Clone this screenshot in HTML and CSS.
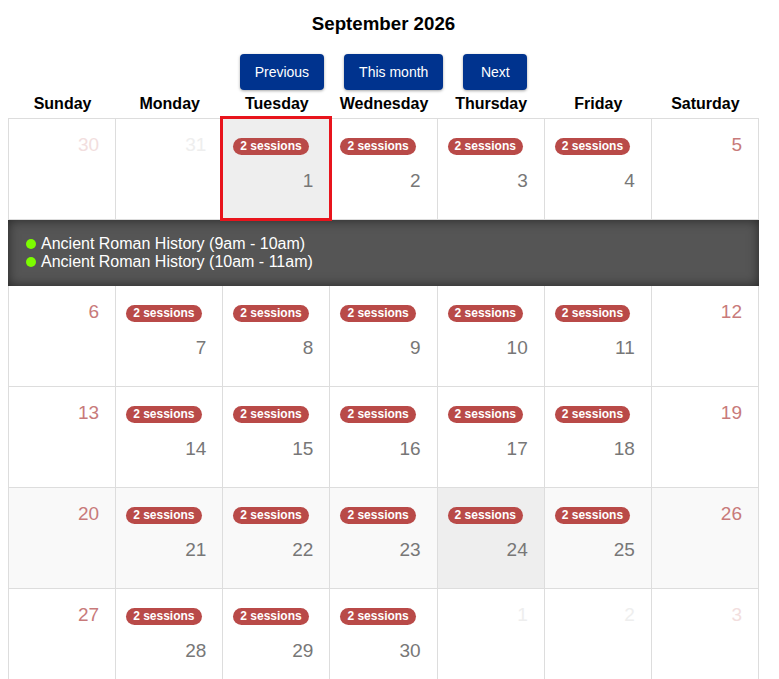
FILE: index.html
```html
<!DOCTYPE html>
<html lang="en">
<head>
    <meta charset="UTF-8">
    <title>Calendar</title>
    <link rel="stylesheet" href="styles.css">
</head>
<body>

<div class="calendar">
    <h3 class="cal_title">September 2026</h3>

    <div class="cal_nav">
        <button class="cal_btn">Previous</button>
        <button class="cal_btn">This month</button>
        <button class="cal_btn">Next</button>
    </div>

    <div class="cal_head">
        <div>Sunday</div>
        <div>Monday</div>
        <div>Tuesday</div>
        <div>Wednesday</div>
        <div>Thursday</div>
        <div>Friday</div>
        <div>Saturday</div>
    </div>

    <div class="cal_grid">
        <!-- week 1 -->
        <div class="day"><div class="day_num other_weekend">30</div></div>
        <div class="day"><div class="day_num other">31</div></div>
        <div class="day selected"><span class="badge">2 sessions</span><div class="day_num">1</div></div>
        <div class="day"><span class="badge">2 sessions</span><div class="day_num">2</div></div>
        <div class="day"><span class="badge">2 sessions</span><div class="day_num">3</div></div>
        <div class="day"><span class="badge">2 sessions</span><div class="day_num">4</div></div>
        <div class="day"><div class="day_num weekend">5</div></div>

        <div class="day_detail">
            <ul>
                <li><span class="dot"></span>Ancient Roman History (9am - 10am)</li>
                <li><span class="dot"></span>Ancient Roman History (10am - 11am)</li>
            </ul>
        </div>

        <!-- week 2 -->
        <div class="day"><div class="day_num weekend">6</div></div>
        <div class="day"><span class="badge">2 sessions</span><div class="day_num">7</div></div>
        <div class="day"><span class="badge">2 sessions</span><div class="day_num">8</div></div>
        <div class="day"><span class="badge">2 sessions</span><div class="day_num">9</div></div>
        <div class="day"><span class="badge">2 sessions</span><div class="day_num">10</div></div>
        <div class="day"><span class="badge">2 sessions</span><div class="day_num">11</div></div>
        <div class="day"><div class="day_num weekend">12</div></div>

        <!-- week 3 -->
        <div class="day"><div class="day_num weekend">13</div></div>
        <div class="day"><span class="badge">2 sessions</span><div class="day_num">14</div></div>
        <div class="day"><span class="badge">2 sessions</span><div class="day_num">15</div></div>
        <div class="day"><span class="badge">2 sessions</span><div class="day_num">16</div></div>
        <div class="day"><span class="badge">2 sessions</span><div class="day_num">17</div></div>
        <div class="day"><span class="badge">2 sessions</span><div class="day_num">18</div></div>
        <div class="day"><div class="day_num weekend">19</div></div>

        <!-- week 4 -->
        <div class="day stripe"><div class="day_num weekend">20</div></div>
        <div class="day stripe"><span class="badge">2 sessions</span><div class="day_num">21</div></div>
        <div class="day stripe"><span class="badge">2 sessions</span><div class="day_num">22</div></div>
        <div class="day stripe"><span class="badge">2 sessions</span><div class="day_num">23</div></div>
        <div class="day today"><span class="badge">2 sessions</span><div class="day_num">24</div></div>
        <div class="day stripe"><span class="badge">2 sessions</span><div class="day_num">25</div></div>
        <div class="day stripe"><div class="day_num weekend">26</div></div>

        <!-- week 5 -->
        <div class="day"><div class="day_num weekend">27</div></div>
        <div class="day"><span class="badge">2 sessions</span><div class="day_num">28</div></div>
        <div class="day"><span class="badge">2 sessions</span><div class="day_num">29</div></div>
        <div class="day"><span class="badge">2 sessions</span><div class="day_num">30</div></div>
        <div class="day"><div class="day_num other">1</div></div>
        <div class="day"><div class="day_num other">2</div></div>
        <div class="day"><div class="day_num other_weekend">3</div></div>
    </div>
</div>

</body>
</html>
```

FILE: styles.css
```css
* {
    box-sizing: border-box;
    margin: 0;
    padding: 0;
}

body {
    margin: 8px;
    font-family: "Liberation Sans", Arial, sans-serif;
    color: #000;
    background: #fff;
}

li {
    list-style: none;
}

.calendar {
    width: 751px;
}

.cal_title {
    padding-top: 5px;
    font-size: 18.7px;
    line-height: 22px;
    font-weight: bold;
    text-align: center;
}

.cal_nav {
    display: flex;
    justify-content: center;
    gap: 20px;
    margin-top: 19px;
}

.cal_btn {
    min-width: 64px;
    height: 36px;
    padding: 0 15px;
    border: none;
    border-radius: 4px;
    background-color: #00338e;
    color: #fff;
    font-family: "Liberation Sans", Arial, sans-serif;
    font-size: 14px;
    box-shadow: 0 1px 3px rgba(0, 0, 0, 0.35);
}

.cal_head {
    display: grid;
    grid-template-columns: repeat(7, 1fr);
    height: 28px;
    padding: 5px 0 0 1px;
    font-size: 16px;
    font-weight: bold;
    line-height: 18px;
    text-align: center;
}

.cal_grid {
    display: grid;
    grid-template-columns: repeat(7, 1fr);
    border-top: 1px solid #ddd;
    border-left: 1px solid #ddd;
}

.day {
    height: 101px;
    padding: 15px 16px 0 10px;
    border-right: 1px solid #ddd;
    border-bottom: 1px solid #ddd;
}

.stripe {
    background-color: #f9f9f9;
}

.today {
    background-color: #eee;
}

.selected {
    position: relative;
    background-color: #eee;
}

.selected::after {
    content: "";
    position: absolute;
    top: -3px;
    left: -3px;
    right: -3px;
    bottom: -2px;
    border: 3px solid #e8141c;
}

.badge {
    display: inline-block;
    height: 17px;
    margin-top: 4px;
    padding: 0 7px;
    border-radius: 9px;
    background-color: #b94a48;
    color: #fff;
    font-size: 12px;
    font-weight: bold;
    line-height: 17px;
    vertical-align: top;
}

.badge + .day_num {
    margin-top: 15px;
}

.day_num {
    font-size: 19px;
    line-height: 22px;
    text-align: right;
    color: #777;
}

.weekend {
    color: #c87a7a;
}

.other {
    color: #eee;
}

.other_weekend {
    color: #f2dede;
}

.day_detail {
    grid-column: 1 / -1;
    height: 66px;
    margin-left: -1px;
    padding: 15px 18px;
    background-color: #555;
    box-shadow: inset 0 0 12px rgba(0, 0, 0, 0.55);
    color: #fff;
    font-size: 16px;
    line-height: 18px;
}

.dot {
    display: inline-block;
    width: 10px;
    height: 10px;
    margin-right: 5px;
    border-radius: 50%;
    background-color: #7cfc00;
}
```
